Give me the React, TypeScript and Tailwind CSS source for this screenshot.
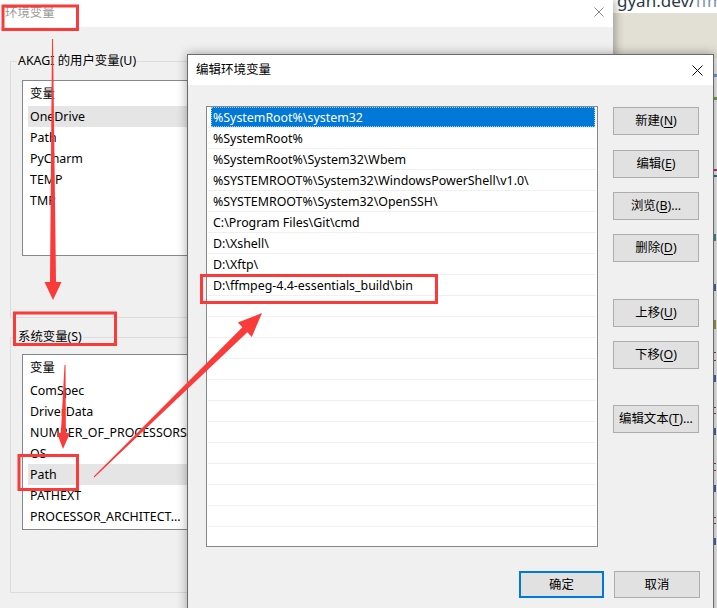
import React from "react";

const userVars = ["OneDrive", "Path", "PyCharm", "TEMP", "TMP"];
const sysVars = [
  "ComSpec",
  "DriverData",
  "NUMBER_OF_PROCESSORS",
  "OS",
  "Path",
  "PATHEXT",
  "PROCESSOR_ARCHITECT...",
];
const paths = [
  "%SystemRoot%\\system32",
  "%SystemRoot%",
  "%SystemRoot%\\System32\\Wbem",
  "%SYSTEMROOT%\\System32\\WindowsPowerShell\\v1.0\\",
  "%SYSTEMROOT%\\System32\\OpenSSH\\",
  "C:\\Program Files\\Git\\cmd",
  "D:\\Xshell\\",
  "D:\\Xftp\\",
  "D:\\ffmpeg-4.4-essentials_build\\bin",
];

function arrowPoints(
  x1: number,
  y1: number,
  x2: number,
  y2: number,
  w0: number,
  w1: number,
  hl: number,
  hw: number
) {
  const dx = x2 - x1;
  const dy = y2 - y1;
  const L = Math.hypot(dx, dy);
  const ux = dx / L;
  const uy = dy / L;
  const nx = -uy;
  const ny = ux;
  const bx = x2 - ux * hl;
  const by = y2 - uy * hl;
  const p = [
    [x1 + (nx * w0) / 2, y1 + (ny * w0) / 2],
    [bx + (nx * w1) / 2, by + (ny * w1) / 2],
    [bx + nx * hw, by + ny * hw],
    [x2, y2],
    [bx - nx * hw, by - ny * hw],
    [bx - (nx * w1) / 2, by - (ny * w1) / 2],
    [x1 - (nx * w0) / 2, y1 - (ny * w0) / 2],
  ];
  return p.map((a) => a.map((v) => v.toFixed(1)).join(",")).join(" ");
}

function CloseX({ color, size }: { color: string; size: number }) {
  return (
    <svg width={size} height={size} viewBox={`0 0 ${size} ${size}`}>
      <path d={`M0.5 0.5 L${size - 0.5} ${size - 0.5} M${size - 0.5} 0.5 L0.5 ${size - 0.5}`} stroke={color} strokeWidth="1" fill="none" />
    </svg>
  );
}

function VarList({ items, hi }: { items: string[]; hi: number }) {
  return (
    <div className="w-[560px] h-[176px] border border-[#828790] bg-white overflow-hidden">
      <div className="h-[25px] flex items-center pl-[7px] pt-[1px] text-black">变量</div>
      {items.map((it, i) => (
        <div
          key={i}
          className={`h-[21px] ml-[5px] pl-[2px] pt-[1px] flex items-center text-black whitespace-nowrap ${i === hi ? "bg-[#e5e5e5]" : ""}`}
        >
          {it}
        </div>
      ))}
    </div>
  );
}

function Btn({ label, k, tail, className }: { label: string; k: string; tail?: string; className?: string }) {
  return (
    <div
      className={`w-[86px] h-[28px] border border-[#adadad] bg-[#e1e1e1] flex items-center justify-center text-black ${className ?? ""}`}
    >
      <span>
        {label}(<span className="underline underline-offset-2">{k}</span>){tail ?? ""}
      </span>
    </div>
  );
}

export default function App() {
  const emptyRows = Array.from({ length: 13 });
  return (
    <div className="relative w-[717px] h-[608px] overflow-hidden bg-[#efefef] text-[12.4px] leading-[16px] [font-family:'Noto_Sans','Noto_Sans_CJK_SC',sans-serif]">
      {/* browser behind, top-right */}
      <div className="absolute left-[612px] top-0 w-[105px] h-[13px] bg-white overflow-hidden">
        <div className="ml-[5px] -mt-[9px] text-[17px] leading-[20px] whitespace-nowrap">
          <span className="text-[#2a3a4a]">gyan.dev/</span>
          <span className="text-[#7a93ad]">ffmp</span>
        </div>
      </div>
      <div className="absolute left-[612px] top-[13px] w-[105px] h-[45px] bg-[#e2dfd4]" />
      {/* colored ticks of background page */}
      <div className="absolute left-[713px] top-[74px] w-[4px] h-[3px] bg-[#6a9ad8]" />
      <div className="absolute left-[713px] top-[97px] w-[4px] h-[3px] bg-[#7aa04a]" />
      <div className="absolute left-[713px] top-[169px] w-[4px] h-[2px] bg-[#c8287a]" />
      <div className="absolute left-[713px] top-[175px] w-[4px] h-[2px] bg-[#2a7a8a]" />
      <div className="absolute left-[714px] top-[234px] w-[2px] h-[7px] bg-[#4a8a8a]" />
      <div className="absolute left-[714px] top-[284px] w-[2px] h-[7px] bg-[#4a6aa0]" />
      <div className="absolute left-[714px] top-[320px] w-[2px] h-[9px] bg-[#a09a40]" />
      <div className="absolute left-[713px] top-[352px] w-[3px] h-[1px] bg-[#a03060]" />
      <div className="absolute left-[713px] top-[360px] w-[3px] h-[1px] bg-[#a03060]" />
      <div className="absolute left-[714px] top-[375px] w-[2px] h-[7px] bg-[#4a6aa0]" />
      <div className="absolute left-[713px] top-[407px] w-[3px] h-[1px] bg-[#a03060]" />
      <div className="absolute left-[713px] top-[413px] w-[3px] h-[1px] bg-[#a03060]" />
      <div className="absolute left-[714px] top-[428px] w-[2px] h-[7px] bg-[#4a6aa0]" />
      <div className="absolute left-[713px] top-[463px] w-[3px] h-[1px] bg-[#a03060]" />
      <div className="absolute left-[713px] top-[470px] w-[3px] h-[1px] bg-[#a03060]" />
      <div className="absolute left-[714px] top-[485px] w-[2px] h-[7px] bg-[#4a6aa0]" />
      <div className="absolute left-[713px] top-[517px] w-[3px] h-[1px] bg-[#a03060]" />
      <div className="absolute left-[713px] top-[523px] w-[3px] h-[1px] bg-[#a03060]" />
      <div className="absolute left-[714px] top-[538px] w-[2px] h-[7px] bg-[#4a6aa0]" />

      {/* back window: 环境变量 */}
      <div className="absolute left-0 top-0 w-[613px] h-[608px] bg-[#f0f0f0] flex flex-col shadow-[3px_0_8px_rgba(0,0,0,0.28)]">
        <div className="h-[27px] bg-white flex items-center justify-between pl-[5px] pr-[9px]">
          <span className="text-[#9a9a9a] -mt-[2px]">环境变量</span>
          <span className="-mt-[4px]">
            <CloseX color="#8a8a8a" size={10} />
          </span>
        </div>
        <div className="flex flex-col">
          <div className="relative mt-[34px] ml-[10px] w-[590px] h-[257px] border border-[#dcdcdc] pt-[18px] pl-[11px]">
            <span className="absolute -top-[9px] left-[6px] px-[1px] bg-[#f0f0f0] text-black whitespace-nowrap">
              AKAGI 的用户变量(U)
            </span>
            <VarList items={userVars} hi={0} />
          </div>
          <div className="relative mt-[19px] ml-[10px] w-[590px] h-[256px] border border-[#dcdcdc] pt-[16px] pl-[11px]">
            <span className="absolute -top-[9px] left-[6px] px-[1px] bg-[#f0f0f0] text-black whitespace-nowrap">
              系统变量(S)
            </span>
            <VarList items={sysVars} hi={4} />
          </div>
        </div>
      </div>

      {/* front dialog: 编辑环境变量 */}
      <div className="absolute left-[187px] top-[54px] w-[527px] h-[570px] border border-[#6a6a6a] bg-[#f0f0f0] flex flex-col shadow-[0_0_10px_rgba(0,0,0,0.35)]">
        <div className="h-[30px] bg-white flex items-center justify-between pl-[8px] pr-[10px] shrink-0">
          <span className="text-black text-[12.5px]">编辑环境变量</span>
          <CloseX color="#111111" size={11} />
        </div>
        <div className="flex pt-[21px] pl-[18px] pr-[13px]">
          <div className="w-[392px] h-[441px] border border-[#828790] bg-white overflow-hidden px-[1px]">
            {paths.map((p, i) => (
              <div key={i} className="h-[21px] border-b border-[#f0f0f0] flex">
                {i === 0 ? (
                  <div className="flex-1 ml-[3px] mr-[1px] bg-[#0078d7] text-white flex items-center pl-[2px] pt-[2px] outline-1 outline-dotted outline-[#9fc7ee] -outline-offset-1">
                    {p}
                  </div>
                ) : (
                  <div className="flex-1 flex items-center pl-[5px] pt-[2px] text-black whitespace-nowrap">{p}</div>
                )}
              </div>
            ))}
            {emptyRows.map((_, i) => (
              <div key={`e${i}`} className="h-[21px] border-b border-[#f0f0f0]" />
            ))}
          </div>
          <div className="ml-[15px] flex flex-col">
            <Btn label="新建" k="N" className="mt-[1px]" />
            <Btn label="编辑" k="E" className="mt-[15px]" />
            <Btn label="浏览" k="B" tail="..." className="mt-[14px]" />
            <Btn label="删除" k="D" className="mt-[14px]" />
            <Btn label="上移" k="U" className="mt-[37px]" />
            <Btn label="下移" k="O" className="mt-[14px]" />
            <Btn label="编辑文本" k="T" tail="..." className="mt-[36px]" />
          </div>
        </div>
        <div className="flex justify-end gap-[10px] pr-[13px] mt-[24px]">
          <div className="w-[85px] h-[27px] border-2 border-[#0078d7] bg-[#e1e1e1] flex items-center justify-center text-black">
            确定
          </div>
          <div className="w-[86px] h-[27px] border border-[#adadad] bg-[#e1e1e1] flex items-center justify-center text-black">
            取消
          </div>
        </div>
      </div>

      {/* red annotations */}
      <svg className="absolute inset-0 pointer-events-none" width="717" height="608" viewBox="0 0 717 608">
        <g fill="none" stroke="#fb3a3a" strokeWidth="3">
          <rect x="3" y="6" width="74.5" height="23.5" />
          <rect x="14.5" y="313" width="101" height="31.5" />
          <rect x="19" y="455.5" width="58.5" height="34" />
          <rect x="201.5" y="275.5" width="235" height="27" />
        </g>
        <g fill="#fb3a3a">
          <polygon points={arrowPoints(52.5, 39, 53, 300, 1, 6, 18, 8.5)} />
          <polygon points={arrowPoints(65, 365, 63, 449, 1, 5, 16, 6.5)} />
          <polygon points={arrowPoints(94, 477, 262, 313, 1, 7, 24, 10)} />
        </g>
      </svg>
    </div>
  );
}
